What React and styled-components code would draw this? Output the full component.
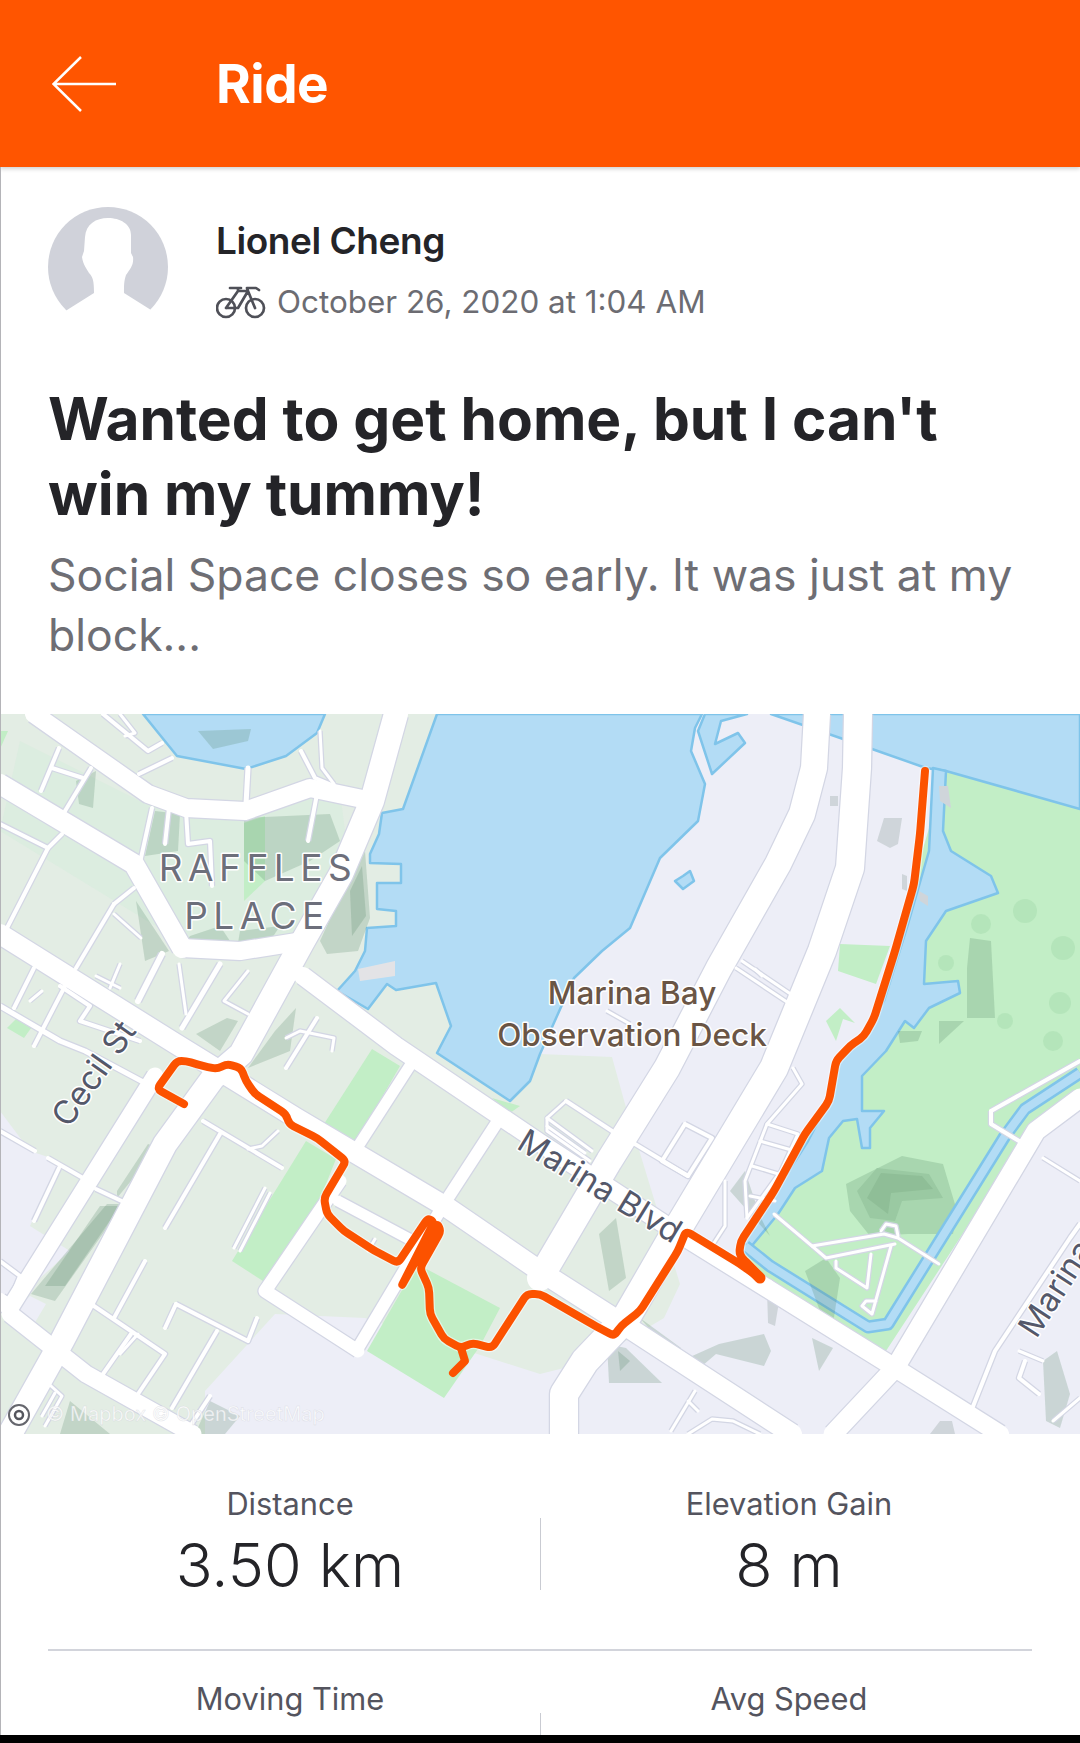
import React from 'react';
import styled, { createGlobalStyle } from 'styled-components';

const GlobalStyle = createGlobalStyle`
  html, body { margin: 0; padding: 0; background: #fff; }
  body { font-family: Inter, "Liberation Sans", sans-serif; }
`;

const Page = styled.div`
  position: relative;
  width: 1080px;
  height: 1743px;
  display: flex;
  flex-direction: column;
  overflow: hidden;
  background: #fff;
  &::after {
    content: '';
    position: absolute;
    left: 0;
    top: 167px;
    bottom: 8px;
    width: 1px;
    background: #b4b4b8;
  }
`;

const Header = styled.header`
  flex: none;
  height: 167px;
  display: flex;
  align-items: center;
  gap: 98px;
  padding-left: 52px;
  background: #ff5500;
  box-shadow: 0 2px 4px rgba(0, 0, 0, 0.18);
  position: relative;
`;

const HeaderTitle = styled.h1`
  margin: 0;
  font-size: 53px;
  font-weight: 700;
  letter-spacing: -0.5px;
  color: #fff;
`;

const Content = styled.main`
  flex: 1;
  min-height: 0;
  overflow: hidden;
`;

const Profile = styled.section`
  display: flex;
  gap: 48px;
  padding: 40px 48px 0;
  height: 174px;
`;

const ProfileText = styled.div`
  display: flex;
  flex-direction: column;
  padding-top: 12px;
`;

const Name = styled.div`
  font-size: 37px;
  line-height: 44px;
  font-weight: 600;
  letter-spacing: -0.45px;
  color: #242428;
`;

const Meta = styled.div`
  display: flex;
  align-items: center;
  gap: 11px;
  margin-top: 21px;
  font-size: 31.4px;
  line-height: 36px;
  color: #6c6c72;
`;

const Title = styled.h2`
  margin: 0;
  padding: 0 48px;
  font-size: 58.6px;
  line-height: 75px;
  font-weight: 700;
  color: #242428;
`;

const Description = styled.p`
  margin: 14px 0 0;
  padding: 0 48px;
  font-size: 44.5px;
  line-height: 60px;
  color: #6e6e74;
`;

const MapFrame = styled.svg`
  display: block;
  width: 1080px;
  height: 720px;
  margin-top: 49px;
`;

const StatRow = styled.div`
  display: grid;
  grid-template-columns: 484px 486px;
  column-gap: 14px;
  margin: 0 48px;
  padding: ${(p) => p.$pad};
  border-bottom: ${(p) => (p.$line ? '2px solid #d2d4db' : 'none')};
`;

const Stat = styled.div`
  position: relative;
  display: flex;
  flex-direction: column;
  align-items: center;
  & + &::before {
    content: '';
    position: absolute;
    left: -6px;
    top: 32px;
    height: 72px;
    width: 1px;
    background: #c9cbd2;
  }
`;

const StatLabel = styled.div`
  font-size: 30.8px;
  line-height: 36px;
  color: #54545e;
`;

const StatValue = styled.div`
  font-size: 61px;
  line-height: 68px;
  font-weight: 300;
  margin-top: 9px;
  color: #242428;
`;

const NavBar = styled.div`
  flex: none;
  height: 8px;
  background: #000;
`;

const pts = (a) => a.map((p) => p.join(',')).join(' ');

// polyline with its corners rounded off at a fixed radius
const roundedPath = (a, r) => {
  let d = `M${a[0][0]} ${a[0][1]}`;
  for (let i = 1; i < a.length - 1; i += 1) {
    const [x, y] = a[i];
    const [px, py] = a[i - 1];
    const [nx, ny] = a[i + 1];
    const l1 = Math.hypot(px - x, py - y) || 1;
    const l2 = Math.hypot(nx - x, ny - y) || 1;
    const r1 = Math.min(r, l1 / 2);
    const r2 = Math.min(r, l2 / 2);
    d += `L${x + ((px - x) * r1) / l1} ${y + ((py - y) * r1) / l1}`;
    d += `Q${x} ${y} ${x + ((nx - x) * r2) / l2} ${y + ((ny - y) * r2) / l2}`;
  }
  const last = a[a.length - 1];
  return `${d}L${last[0]} ${last[1]}`;
};

const WATER = '#b3dcf5';
const SHORE = '#7fc4ea';

// big land tints
const leftLand = [[0,713],[440,713],[540,1053],[612,1056],[625,1103],[680,1283],[664,1317],[592,1360],[540,1373],[365,1317],[275,1313],[205,1390],[205,1433],[0,1433]];
const leftLavender = [
  [[0,1110],[30,1150],[60,1160],[30,1225],[70,1250],[15,1300],[0,1300]],
  [[14,1310],[34,1323],[46,1303],[30,1295]],
];

const waters = [
  [[437,713],[403,808],[382,812],[379,833],[370,853],[370,862],[401,863],[401,882],[377,882],[377,908],[396,910],[396,925],[367,927],[365,950],[355,970],[337,990],[368,1008],[387,983],[396,989],[436,982],[451,1025],[437,1052],[510,1100],[530,1080],[540,1053],[574,977],[602,950],[630,927],[660,857],[698,820],[705,783],[691,750],[695,727],[702,713]],
  [[143,713],[177,755],[246,768],[286,755],[317,732],[325,713]],
  [[771,713],[1080,713],[1080,808],[946,770],[926,767],[872,748]],
  [[698,730],[712,773],[745,742],[738,732],[715,743],[721,720],[747,713],[705,713]],
  [[683,875],[690,870],[694,880],[683,888],[675,880]],
];

const park = [[946,770],[1039,793],[1080,808],[1080,1100],[1030,1130],[884,1353],[764,1280],[740,1250],[830,1100],[860,1060]];

const river = [[933,767],[946,770],[943,830],[951,850],[991,875],[998,892],[946,910],[926,940],[924,983],[958,980],[960,992],[929,1007],[914,1027],[905,1020],[886,1050],[862,1075],[862,1110],[884,1110],[870,1127],[870,1147],[862,1147],[857,1118],[843,1120],[829,1137],[822,1170],[795,1187],[778,1213],[750,1247],[741,1240],[774,1193],[808,1140],[829,1100],[836,1063],[864,1035],[884,1000],[908,923],[929,850]];

const canal = [[745,1245],[770,1265],[868,1326],[888,1323],[1005,1135],[1025,1108],[1080,1072]];

const greens = [
  [[306,1140],[336,1158],[318,1203],[263,1280],[232,1260]],
  [[324,1123],[355,1143],[400,1065],[372,1048]],
  [[417,1263],[500,1307],[480,1345],[444,1397],[367,1350]],
  [[21,1013],[34,1023],[24,1037],[7,1027]],
  [[0,730],[8,730],[0,748]],
  [[840,943],[890,945],[876,983],[838,970]],
  [[826,1020],[840,1007],[855,1022],[843,1018],[836,1040]],
  [[244,822],[265,815],[265,880],[244,900]],
  [[492,1097],[520,1105],[510,1112]],
];

const tints = [
  [[244,817],[330,813],[340,840],[310,860],[265,880],[244,860]],
  [[344,887],[365,850],[370,917],[358,950],[327,953],[320,940]],
  [[350,890],[362,865],[366,915],[352,935]],
  [[136,900],[169,950],[145,960]],
  [[76,780],[96,770],[93,807],[79,803]],
  [[155,810],[180,813],[178,850],[145,855]],
  [[190,935],[220,925],[230,940],[185,942]],
  [[240,930],[280,925],[270,940],[238,942]],
  [[196,1033],[227,1017],[238,1020],[220,1050]],
  [[248,1067],[275,1030],[296,1007],[290,1050]],
  [[55,1300],[124,1203],[107,1203],[31,1293]],
  [[65,1285],[120,1205],[100,1205],[45,1285]],
  [[117,1197],[158,1147],[148,1143],[117,1190]],
  [[599,1233],[616,1217],[626,1277],[609,1290]],
  [[640,1317],[681,1347],[681,1360],[719,1343],[764,1333],[771,1350],[764,1365],[716,1353],[702,1365],[660,1340]],
  [[607,1343],[626,1347],[662,1382],[609,1382]],
  [[618,1350],[630,1360],[620,1370]],
  [[812,1337],[833,1347],[819,1370]],
  [[1043,1360],[1057,1350],[1070,1393],[1060,1427],[1046,1420]],
  [[198,730],[251,728],[248,740],[213,748]],
  [[805,1270],[826,1257],[840,1277],[833,1323],[820,1310]],
  [[967,967],[970,937],[991,940],[995,1017],[967,1017]],
  [[939,1020],[964,1020],[939,1043]],
  [[898,1030],[922,1030],[918,1040],[900,1042]],
  [[210,1400],[240,1415],[225,1433],[195,1433]],
  [[70,1400],[110,1433],[60,1433]],
  [[770,1235],[730,1190],[745,1170],[760,1215]],
];

const blobs = [[1025,910,12],[1063,947,12],[1060,1002,11],[946,962,8],[981,923,10],[1053,1040,10],[1005,1020,8]];

const greys = [
  [[884,817],[902,817],[898,843],[890,847],[877,840]],
  [[902,873],[907,875],[907,890],[902,888]],
  [[919,890],[928,895],[928,905],[920,900]],
  [[939,785],[948,785],[951,807],[940,800]],
  [[830,795],[838,795],[838,805],[830,805]],
  [[767,1290],[780,1295],[775,1325],[768,1322]],
  [[930,1433],[940,1420],[952,1420],[955,1433]],
];

const hill = [
  { fill: '#a8d6af', p: [[846,1183],[902,1155],[943,1163],[957,1210],[953,1233],[908,1233],[870,1235],[850,1210]] },
  { fill: '#9ac9a2', p: [[857,1190],[877,1167],[929,1173],[943,1197],[902,1200],[895,1220],[870,1217]] },
  { fill: '#8fbe97', p: [[867,1197],[881,1172],[922,1175],[933,1188],[891,1192],[888,1213]] },
];

// [points, width]
const roads = [
  // thin streets
  [[[41,790],[59,747]],4],[[[52,767],[83,777]],4],[[[65,810],[91,767]],4],
  [[[152,807],[141,857]],4],[[[169,807],[165,843]],4],[[[186,810],[188,843],[210,840],[212,885]],4],
  [[[317,793],[308,840]],4],[[[248,767],[246,803]],5],[[[301,750],[315,777],[339,787]],4],
  [[[320,730],[322,767],[334,783]],3],[[[103,713],[148,750],[162,742]],4],[[[120,713],[135,732],[125,735]],3],
  [[[139,773],[172,757]],4],[[[0,823],[48,847],[7,927]],4],[[[62,833],[48,847]],4],
  [[[114,903],[76,967]],4],[[[114,913],[141,937]],3],[[[114,903],[134,887]],4],
  [[[162,953],[138,1000]],6],[[[179,963],[186,1013]],3],[[[220,963],[182,1027]],5],
  [[[248,970],[224,1000],[248,1013]],3],[[[120,963],[110,987]],3],[[[96,975],[120,987]],3],
  [[[34,967],[14,1007]],4],[[[65,985],[34,1045]],4],[[[0,1005],[60,1040],[85,1050],[145,1082]],5],
  [[[60,985],[90,1005],[80,1020],[140,1040]],4],[[[30,1000],[42,990]],3],
  [[[286,1037],[300,1030],[334,1037],[332,1050]],3],[[[317,1017],[286,1067]],4],
  [[[203,1120],[282,1167]],4],[[[220,1133],[165,1227]],4],[[[145,1260],[114,1317]],4],
  [[[91,1303],[165,1353],[138,1393]],4],[[[176,1303],[165,1327]],4],[[[176,1303],[248,1340],[257,1317]],4],
  [[[217,1330],[172,1407]],4],[[[131,1333],[103,1373]],4],[[[138,1333],[120,1353]],3],
  [[[48,1157],[83,1177]],4],[[[96,1188],[128,1203]],4],[[[0,1130],[35,1150]],4],
  [[[59,1167],[34,1220]],4],[[[265,1187],[234,1247]],3],[[[270,1192],[240,1250]],3],
  [[[278,1130],[262,1145],[248,1148]],3],[[[338,1200],[413,1240]],11],[[[375,1238],[368,1250]],3],
  [[[630,1140],[688,1175]],4],[[[685,1123],[712,1137],[688,1175],[662,1160],[685,1123]],4],
  [[[566,1100],[612,1130]],4],[[[547,1117],[592,1150]],3],[[[547,1125],[585,1152]],3],[[[566,1100],[547,1117],[547,1130],[590,1160]],3],
  [[[736,967],[793,1005]],3],[[[742,960],[798,998]],3],[[[755,968],[762,975]],3],[[[607,1010],[630,1023]],3],
  [[[793,1067],[802,1083],[767,1123],[798,1133],[781,1170],[747,1217]],3],[[[767,1123],[745,1180],[747,1217]],3],
  [[[760,1140],[795,1150]],3],[[[752,1165],[785,1175]],3],[[[750,1195],[775,1200]],3],
  [[[725,1180],[725,1225],[712,1245]],3],
  [[[774,1213],[812,1245],[884,1233],[898,1237],[939,1263]],3],[[[812,1245],[826,1257],[895,1243]],3],
  [[[836,1260],[836,1267],[867,1287],[871,1253]],3],[[[891,1245],[872,1313],[862,1305],[866,1300],[876,1300]],3],
  [[[881,1230],[886,1223],[896,1225],[898,1235]],3],[[[770,1280],[780,1290],[785,1300]],3],
  [[[991,1110],[1080,1060]],4],[[[991,1110],[991,1123],[1019,1140]],4],
  [[[1043,1157],[1080,1180]],3],[[[970,1413],[995,1350],[1070,1237],[1080,1223]],4],
  [[[1019,1350],[1043,1360]],3],[[[1025,1360],[1019,1377],[1039,1393]],4],[[[1080,1397],[1053,1420]],3],
  [[[671,1430],[695,1390]],3],[[[688,1400],[698,1410]],3],[[[688,1433],[712,1418],[733,1420],[760,1433]],3],
  [[[22,1400],[40,1375],[62,1395],[45,1425]],3],[[[30,1410],[45,1385]],3],[[[42,1415],[55,1392]],3],
  // collectors
  [[[185,1433],[210,1395]],4],[[[0,1260],[20,1275],[10,1300]],4],
  [[[413,1060],[355,1150]],11],[[[496,1123],[444,1203],[358,1347]],12],
  [[[340,1180],[265,1290],[358,1350]],13],
  // arterials
  [[[34,713],[148,793],[186,807],[245,810],[310,787],[372,800]],18],
  [[[0,783],[134,863],[182,947]],20],[[[182,947],[240,950],[303,940]],18],
  [[[0,933],[176,1043],[296,1117],[448,1207],[540,1270],[626,1325],[792,1433]],20],
  [[[303,975],[396,1045],[540,1142],[678,1232],[884,1360],[1000,1433]],18],
  [[[396,713],[372,800],[341,873],[303,940],[241,1053],[213,1077],[165,1143],[62,1340],[10,1433]],24],
  [[[155,1075],[10,1307]],17],[[[10,1313],[86,1373],[193,1433]],17],[[[0,1300],[10,1307]],16],
  [[[817,713],[814,767],[802,813],[778,863],[719,967],[667,1067],[609,1160],[540,1277]],26],
  [[[858,713],[857,767],[850,867],[822,950],[774,1067],[678,1227],[626,1317],[585,1360],[564,1393],[564,1433]],28],
  [[[1080,1097],[1036,1130],[895,1367],[833,1433]],19],
];

const route = [[925,770],[920,833],[914,883],[895,950],[874,1017],[864,1035],[850,1045],[836,1060],[829,1100],[805,1133],[774,1190],[741,1240],[739,1253],[760,1277],[740,1263],[686,1230],[678,1250],[640,1310],[621,1325],[614,1335],[592,1323],[540,1293],[527,1293],[492,1347],[472,1342],[461,1347],[444,1338],[430,1313],[429,1287],[420,1267],[441,1230],[437,1222],[401,1286],[434,1221],[428,1217],[398,1262],[375,1250],[344,1230],[327,1213],[324,1197],[346,1160],[317,1137],[289,1123],[286,1113],[255,1093],[246,1080],[241,1067],[227,1063],[217,1068],[203,1065],[186,1060],[177,1060],[157,1088],[184,1103]];

const RoadLayer = ({ color, extra }) => roads.map(([p, w], i) => (
  <polyline key={i} points={pts(p)} fill="none" stroke={color} strokeWidth={w + extra} strokeLinejoin="round" strokeLinecap={extra ? 'butt' : 'round'} />
));

const labelHalo = { paintOrder: 'stroke', strokeLinejoin: 'round' };

const RideMap = () => (
  <MapFrame viewBox="0 713 1080 720" fontFamily="Inter, sans-serif">
    <rect x="0" y="713" width="1080" height="720" fill="#edeef7" />
    <polygon points={pts(leftLand)} fill="#e3ede4" />
    <polygon points="20,740 140,800 240,810 340,790 350,870 300,950 180,940 0,830" fill="#d9ecde" opacity="0.7" />
    {leftLavender.map((p, i) => <polygon key={i} points={pts(p)} fill="#edeef7" />)}
    <polygon points={pts(park)} fill="#c2eec6" />
    {hill.map((h, i) => <polygon key={i} points={pts(h.p)} fill={h.fill} />)}
    {blobs.map(([x, y, r], i) => <circle key={i} cx={x} cy={y} r={r} fill="#a9dfb0" opacity="0.55" />)}
    {greens.map((p, i) => <polygon key={i} points={pts(p)} fill="#c2eec6" />)}
    {waters.map((p, i) => <polygon key={i} points={pts(p)} fill={WATER} stroke={SHORE} strokeWidth="2.5" strokeLinejoin="round" />)}
    <polygon points={pts(river)} fill={WATER} stroke={SHORE} strokeWidth="2.5" strokeLinejoin="round" />
    <polyline points={pts(canal)} fill="none" stroke={SHORE} strokeWidth="13" strokeLinejoin="round" />
    <polyline points={pts(canal)} fill="none" stroke={WATER} strokeWidth="8" strokeLinejoin="round" />
    {tints.map((p, i) => <polygon key={i} points={pts(p)} fill="#4f7f60" opacity="0.22" />)}
    {greys.map((p, i) => <polygon key={i} points={pts(p)} fill="#cfd5da" />)}
    <polygon points="358,968 395,960 395,975 360,980" fill="#e3e3e6" />
    <RoadLayer color="#d3d6e4" extra={2.5} />
    <RoadLayer color="#ffffff" extra={0} />

    <path d={roundedPath(route, 5)} fill="none" stroke="#ffffff" strokeOpacity="0.5" strokeWidth="10.5" strokeLinejoin="round" strokeLinecap="round" />
    <path d={roundedPath(route, 5)} fill="none" stroke="#fc5200" strokeWidth="8" strokeLinejoin="round" strokeLinecap="round" />
    <polyline points="461,1347 465,1360 453,1372" fill="none" stroke="#fc5200" strokeWidth="8" strokeLinecap="round" strokeLinejoin="round" />
    <polyline points="745,1262 760,1277" fill="none" stroke="#fc5200" strokeWidth="11" strokeLinecap="round" />

    <g fontSize="37" fill="#6d6f7b" stroke="#fff" strokeWidth="3" style={labelHalo} textAnchor="middle">
      <text x="258" y="880" letterSpacing="5.5">RAFFLES</text>
      <text x="257" y="928" letterSpacing="5.5">PLACE</text>
    </g>
    <g fontSize="31.5" fontWeight="500" fill="#6a5545" stroke="#fff" strokeWidth="3" style={labelHalo} textAnchor="middle">
      <text x="632" y="1003">Marina Bay</text>
      <text x="632" y="1045">Observation Deck</text>
    </g>
    <g fontSize="33" fill="#54586a" stroke="#fff" strokeWidth="3" style={labelHalo} textAnchor="middle">
      <text transform="translate(594 1195) rotate(31.5)">Marina Blvd</text>
      <text transform="translate(103 1079) rotate(-55)">Cecil St</text>
      <text transform="translate(1076 1277) rotate(-57)">Marina M</text>
    </g>
    <text x="46" y="1420" fontSize="20" fill="#fff" fillOpacity="0.75" stroke="#c9ccd4" strokeOpacity="0.45" strokeWidth="0.6">© Mapbox © OpenStreetMap</text>
    <circle cx="19" cy="1414" r="10" fill="#fff" stroke="#55565e" strokeWidth="2" opacity="0.9" />
    <circle cx="19" cy="1414" r="4" fill="none" stroke="#55565e" strokeWidth="2.5" />
  </MapFrame>
);

const BackArrow = () => (
  <svg width="66" height="56" viewBox="0 0 66 56" fill="none" stroke="#fff" strokeWidth="2.5">
    <path d="M1.5 28H64M29 1L1.5 28L29 55" />
  </svg>
);

const Avatar = () => (
  <svg width="120" height="120" viewBox="0 0 120 120" style={{ flex: 'none' }}>
    <circle cx="60" cy="60" r="60" fill="#d0d2da" />
    <path d="M60 11C48 11 38 17 37 30L36 44L34 50C35 58 39 62 41 66C45 70 46 74 46 86L19 103L0 125H120L103 103L76 86C76 78 76 74 78 68C82 62 86 58 85 50L83 46L83 28C83 17 72 11 60 11Z" fill="#fff" />
  </svg>
);

const BikeIcon = () => (
  <svg width="50" height="34" viewBox="0 0 50 34" fill="none" stroke="#4f5058" strokeWidth="2.7" strokeLinejoin="round" strokeLinecap="round">
    <circle cx="10" cy="23" r="9" />
    <circle cx="39" cy="23" r="9" />
    <path d="M10 23L22 6H32L22 23H10M22 6V3M14 3H25M32 6L39 23M32 6L31 3H40L43 5" />
  </svg>
);

const StatCell = ({ label, value }) => (
  <Stat>
    <StatLabel>{label}</StatLabel>
    {value && <StatValue>{value}</StatValue>}
  </Stat>
);

export default function App() {
  return (
    <Page>
      <GlobalStyle />
      <Header>
        <BackArrow />
        <HeaderTitle>Ride</HeaderTitle>
      </Header>
      <Content>
        <Profile>
          <Avatar />
          <ProfileText>
            <Name>Lionel Cheng</Name>
            <Meta>
              <BikeIcon />
              October 26, 2020 at 1:04 AM
            </Meta>
          </ProfileText>
        </Profile>
        <Title>Wanted to get home, but I can't<br />win my tummy!</Title>
        <Description>Social Space closes so early. It was just at my<br />block...</Description>
        <RideMap />
        <StatRow $pad="52px 0 50px" $line>
          <StatCell label="Distance" value="3.50 km" />
          <StatCell label="Elevation Gain" value="8 m" />
        </StatRow>
        <StatRow $pad="30px 0 0">
          <StatCell label="Moving Time" value=" " />
          <StatCell label="Avg Speed" value=" " />
        </StatRow>
      </Content>
      <NavBar />
    </Page>
  );
}
